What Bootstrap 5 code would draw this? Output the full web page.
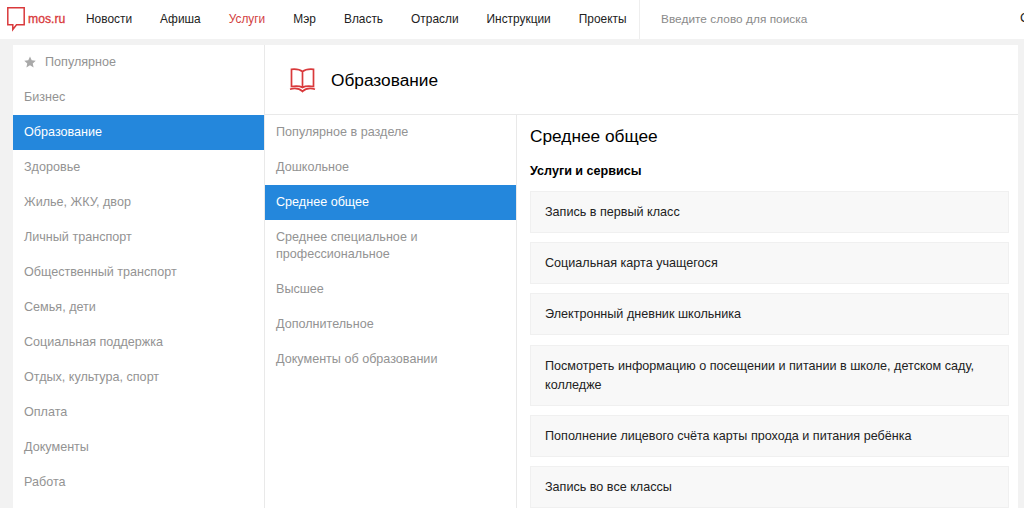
<!DOCTYPE html>
<html lang="ru">
<head>
<meta charset="utf-8">
<title>mos.ru</title>
<link href="https://cdn.jsdelivr.net/npm/bootstrap@5.3.0/dist/css/bootstrap.min.css" rel="stylesheet">
<style>
html,body{height:508px;overflow:hidden}
body{background:#f2f2f2;font-family:"Liberation Sans",Arial,sans-serif;font-size:12.6px;color:#000;line-height:18px}
.topbar{height:39px;background:#fff;overflow:hidden}
.logo-box{width:86px;padding-left:7px;flex:none;height:39px}
.logo-text{color:#d9393b;font-size:12.2px;margin-left:3px;margin-bottom:2px;-webkit-text-stroke:.3px #d9393b}
.top-links{gap:28px;border-right:1px solid #eee;height:39px;flex:none;width:554px;padding-bottom:2px}
.top-links a{color:#222;font-size:11.9px;text-decoration:none}
.top-links a.on{color:#d2413f}
.search-hint{color:#8a8a8a;font-size:11.8px;padding-left:21px;padding-bottom:2px;letter-spacing:.05px;width:380px;flex:none}
.cut-text{white-space:nowrap;font-size:13px;color:#222;flex:none;padding-bottom:4px}
.panel{margin:6px 6px 0 13px;background:#fff;height:463px}
.side{width:252px;flex:none;border-right:1px solid #e9e9e9;height:463px}
.menu-row{display:block;height:35px;padding:8px 11px 0;color:#939393;text-decoration:none}
.menu-row.on{background:#2487dc;color:#fff}
.menu-row.tall{height:auto;padding-top:9px;padding-bottom:9px;line-height:17px}
.star-icon{margin-right:9px;margin-top:3px;flex:none}
.title-bar{height:70px;border-bottom:1px solid #e9e9e9;padding-left:24px;padding-top:1px}
.title-bar h1{font-size:17.3px;line-height:24px;margin:0 0 0 15px;font-weight:400}
.mid{width:252px;flex:none;border-right:1px solid #e9e9e9;height:393px}
.detail{padding:9px 9px 0 13px;flex:1;min-width:0;overflow:hidden}
.detail h2{font-size:17.3px;line-height:24px;margin:0 0 14px;font-weight:400}
.detail h3{font-size:12.6px;line-height:18px;margin:0 0 11px;font-weight:700}
.svc{background:#f8f8f8;border:1px solid #f0f0f0;padding:10.5px 14px;margin-bottom:9px;line-height:19px;color:#222}
.svc-gap{margin-bottom:10px}
.flex-fill-min{min-width:0}
</style>
</head>
<body>
<header class="topbar d-flex align-items-center">
  <div class="logo-box d-flex align-items-center">
    <svg width="18" height="25" viewBox="0 0 18 25"><path d="M.8.800H17.200V17.700H9.500L5.800 22.500V17.700H.8Z" fill="none" stroke="#d9393b" stroke-width="1.500"/></svg>
    <span class="logo-text">mos.ru</span>
  </div>
  <nav class="top-links d-flex align-items-center">
    <a href="#">Новости</a><a href="#">Афиша</a><a href="#" class="on">Услуги</a><a href="#">Мэр</a><a href="#">Власть</a><a href="#">Отрасли</a><a href="#">Инструкции</a><a href="#">Проекты</a>
  </nav>
  <div class="search-hint">Введите слово для поиска</div>
  <div class="cut-text">Сервисы</div>
</header>
<main class="panel d-flex">
  <aside class="side">
    <a href="#" class="menu-row d-flex align-items-start"><svg width="12" height="12" viewBox="0 0 24 24" class="star-icon"><path d="M12 1l3.400 7.400 8.100.9-6 5.500 1.700 8L12 18.700 4.800 22.800l1.700-8-6-5.500 8.100-.9z" fill="#a9a9a9"/></svg><span>Популярное</span></a>
    <a href="#" class="menu-row">Бизнес</a>
    <a href="#" class="menu-row on">Образование</a>
    <a href="#" class="menu-row">Здоровье</a>
    <a href="#" class="menu-row">Жилье, ЖКУ, двор</a>
    <a href="#" class="menu-row">Личный транспорт</a>
    <a href="#" class="menu-row">Общественный транспорт</a>
    <a href="#" class="menu-row">Семья, дети</a>
    <a href="#" class="menu-row">Социальная поддержка</a>
    <a href="#" class="menu-row">Отдых, культура, спорт</a>
    <a href="#" class="menu-row">Оплата</a>
    <a href="#" class="menu-row">Документы</a>
    <a href="#" class="menu-row">Работа</a>
  </aside>
  <section class="flex-grow-1 flex-fill-min">
    <div class="title-bar d-flex align-items-center">
      <svg width="27" height="25" viewBox="0 0 27 25" fill="none" stroke="#d9393b" stroke-width="1.700"><path d="M13.500 3.500C11 1.500 6 1 2.500 1.300V18.500C6 18 11 18 13.500 19.500C16 18 21 18 24.500 18.500V1.300C21 1 16 1.500 13.500 3.500ZM13.500 3.500V19.500"/><path d="M1 21.200C6 19.800 10.500 20.500 13.500 23.500C16.500 20.500 21 19.800 26 21.200"/></svg>
      <h1>Образование</h1>
    </div>
    <div class="d-flex">
      <div class="mid">
        <a href="#" class="menu-row">Популярное в разделе</a>
        <a href="#" class="menu-row">Дошкольное</a>
        <a href="#" class="menu-row on">Среднее общее</a>
        <a href="#" class="menu-row tall">Среднее специальное и профессиональное</a>
        <a href="#" class="menu-row">Высшее</a>
        <a href="#" class="menu-row">Дополнительное</a>
        <a href="#" class="menu-row">Документы об образовании</a>
      </div>
      <div class="detail">
        <h2>Среднее общее</h2>
        <h3>Услуги и сервисы</h3>
        <div class="svc">Запись в первый класс</div>
        <div class="svc">Социальная карта учащегося</div>
        <div class="svc svc-gap">Электронный дневник школьника</div>
        <div class="svc">Посмотреть информацию о посещении и питании в школе, детском саду, колледже</div>
        <div class="svc">Пополнение лицевого счёта карты прохода и питания ребёнка</div>
        <div class="svc">Запись во все классы</div>
      </div>
    </div>
  </section>
</main>
<script src="https://cdn.jsdelivr.net/npm/bootstrap@5.3.0/dist/js/bootstrap.bundle.min.js"></script>
</body>
</html>
